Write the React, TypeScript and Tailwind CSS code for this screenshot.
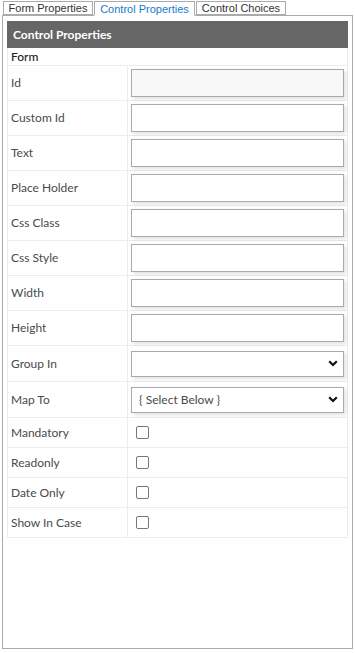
import React from 'react';

const textRows = [
  { label: 'Id', disabled: true },
  { label: 'Custom Id' },
  { label: 'Text' },
  { label: 'Place Holder' },
  { label: 'Css Class' },
  { label: 'Css Style' },
  { label: 'Width' },
  { label: 'Height' },
];

const selectRows = [
  { label: 'Group In', value: '' },
  { label: 'Map To', value: '{ Select Below }' },
];

const checkRows = ['Mandatory', 'Readonly', 'Date Only', 'Show In Case'];

const tabs = [
  { label: 'Form Properties', width: 'w-[90px]', active: false },
  { label: 'Control Properties', width: 'w-[101px]', active: true },
  { label: 'Control Choices', width: 'w-[90px]', active: false },
];

function Chevron() {
  return (
    <svg width="10" height="7" viewBox="0 0 10 7" className="shrink-0">
      <path d="M1.2 1.3 L5 5 L8.8 1.3" fill="none" stroke="#111" strokeWidth="2.2" />
    </svg>
  );
}

function Row({ label, h, children }: { label: string; h: string; children: React.ReactNode }) {
  return (
    <div className={`flex border-b border-[#ececec] ${h}`}>
      <div className="w-[120px] shrink-0 border-r border-[#ececec] pl-[3px] flex items-center text-[12px] text-[#4a4a4a]">
        {label}
      </div>
      <div className="flex-1 px-[3px] flex items-center">{children}</div>
    </div>
  );
}

export default function App() {
  return (
    <div className="w-[355px] h-[653px] bg-white font-['Lato',sans-serif]">
      <div className="relative z-10 flex gap-[1px] pl-[3px] pt-[1px] h-[16px] font-['Liberation_Sans',Arial,sans-serif] text-[11px]">
        {tabs.map((t) => (
          <div
            key={t.label}
            className={`${t.width} flex items-center justify-center border border-[#aaa] leading-none pt-px ${
              t.active ? 'bg-white border-b-white text-[#1c78cc] h-[15px]' : 'bg-white text-[#333] h-[14px]'
            }`}
          >
            {t.label}
          </div>
        ))}
      </div>
      <div className="mx-[2px] -mt-px border border-[#aaa] h-[634px] px-[4px] pt-[5px]">
        <div className="h-[27px] bg-[#666] text-white font-bold text-[12px] flex items-center pl-[6px]">
          Control Properties
        </div>
        <div className="border-x border-[#ececec]">
          <div className="h-[18px] border-b border-[#ececec] pl-[3px] flex items-center text-[12px] font-medium text-[#222]">
            Form
          </div>
          {textRows.map((r) => (
            <Row key={r.label} label={r.label} h="h-[35px]">
              <input
                type="text"
                disabled={r.disabled}
                className={`w-full h-[28px] border border-[#aaa] shadow-[2px_2px_4px_rgba(0,0,0,0.12)] outline-none ${
                  r.disabled ? 'bg-[#f8f8f8]' : 'bg-white'
                }`}
              />
            </Row>
          ))}
          {selectRows.map((r) => (
            <Row key={r.label} label={r.label} h="h-[36px]">
              <div className="w-full h-[26px] border border-[#aaa] bg-white shadow-[2px_2px_4px_rgba(0,0,0,0.12)] flex items-center justify-between pl-[7px] pr-[5px] text-[12px] text-[#4a4a4a]">
                <span>{r.value}</span>
                <Chevron />
              </div>
            </Row>
          ))}
          {checkRows.map((label) => (
            <Row key={label} label={label} h="h-[30px]">
              <div className="ml-[5px] w-[13px] h-[13px] rounded-[2px] border border-[#777] bg-white" />
            </Row>
          ))}
        </div>
      </div>
    </div>
  );
}
